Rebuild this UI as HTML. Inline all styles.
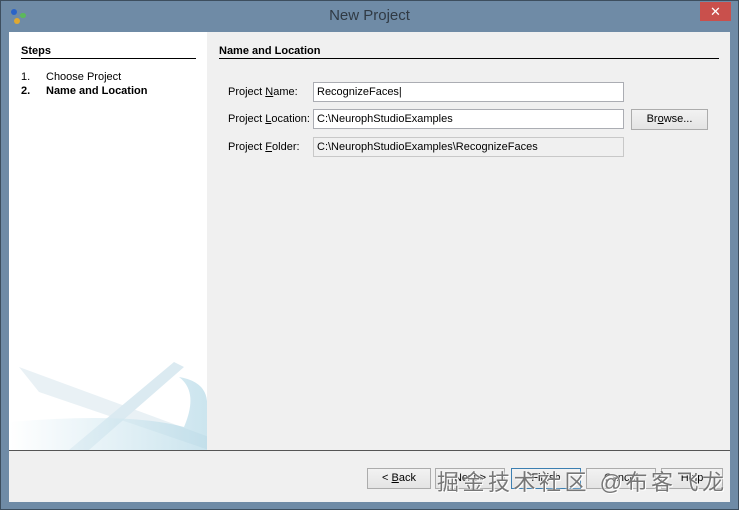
<!DOCTYPE html>
<html><head><meta charset="utf-8"><style>
body{margin:0;width:739px;height:510px;background:#6f8ba6;font-family:"Liberation Sans",sans-serif;font-size:11px;color:#000;position:relative;overflow:hidden}
.a{position:absolute}
.btn{position:absolute;height:21px;background:linear-gradient(#f2f2f2,#e4e4e4);border:1px solid #acacac;box-sizing:border-box;text-align:center;line-height:19px;font-size:11px}
.in{position:absolute;height:20px;box-sizing:border-box;border:1px solid #abadb3;background:#fff;padding-left:3px;line-height:18px;font-size:11px}
</style></head><body>
<div class="a" style="left:0;top:0;width:739px;height:510px;border:1px solid #3d4e5e;box-sizing:border-box"></div>
<div class="a" style="left:11px;top:9px;width:6px;height:6px;border-radius:3px;background:#2a63c8"></div>
<div class="a" style="left:20px;top:13px;width:6px;height:5px;border-radius:3px;background:#5cb85c"></div>
<div class="a" style="left:14px;top:18px;width:6px;height:6px;border-radius:3px;background:#e0a830"></div>
<div class="a" style="left:0;top:7px;width:739px;text-align:center;font-size:15px;color:#303a44">New Project</div>
<div class="a" style="left:700px;top:2px;width:31px;height:19px;background:#c9504c;color:#fff;text-align:center;line-height:19px;font-size:13px">✕</div>
<div class="a" style="left:9px;top:32px;width:721px;height:470px;background:#f0f0f0"></div>
<div class="a" style="left:9px;top:32px;width:198px;height:418px;background:#fff;overflow:hidden">
<svg width="198" height="418" style="position:absolute;left:0;top:0"><defs><linearGradient id="g" x1="0" x2="1"><stop offset="0" stop-color="#fff"/><stop offset="1" stop-color="#a9d3e3"/></linearGradient></defs>
<path d="M10 335 L200 405 L200 418 L30 360Z" fill="#e3eef3" opacity=".8"/>
<path d="M165 330 L60 418 L80 418 L175 335Z" fill="#dbeaf1"/>
<path d="M0 390 Q120 380 175 395 Q190 360 170 345 Q200 350 198 375 L198 418 L0 418Z" fill="url(#g)" opacity=".6"/>
</svg></div>
<div class="a" style="left:9px;top:450px;width:721px;height:1px;background:#555"></div>
<div class="a" style="left:21px;top:45px;font-weight:bold">Steps</div>
<div class="a" style="left:21px;top:58px;width:175px;height:1px;background:#000"></div>
<div class="a" style="left:21px;top:71px">1.</div><div class="a" style="left:46px;top:71px">Choose Project</div>
<div class="a" style="left:21px;top:85px;font-weight:bold">2.</div><div class="a" style="left:46px;top:85px;font-weight:bold">Name and Location</div>
<div class="a" style="left:219px;top:45px;font-weight:bold">Name and Location</div>
<div class="a" style="left:219px;top:58px;width:500px;height:1px;background:#000"></div>
<div class="a" style="left:228px;top:86px">Project <u>N</u>ame:</div>
<div class="a" style="left:228px;top:113px">Project <u>L</u>ocation:</div>
<div class="a" style="left:228px;top:141px">Project <u>F</u>older:</div>
<div class="in" style="left:313px;top:82px;width:311px">RecognizeFaces|</div>
<div class="in" style="left:313px;top:109px;width:311px">C:\NeurophStudioExamples</div>
<div class="in" style="left:313px;top:137px;width:311px;background:#f0f0f0;border-color:#c8c8c8">C:\NeurophStudioExamples\RecognizeFaces</div>
<div class="btn" style="left:631px;top:109px;width:77px;height:21px">Br<u>o</u>wse...</div>
<div class="btn" style="left:367px;top:468px;width:64px">&lt; <u>B</u>ack</div>
<div class="btn" style="left:435px;top:468px;width:70px">Next &gt;</div>
<div class="btn" style="left:511px;top:468px;width:70px;border-color:#3c7fb1">Finish</div>
<div class="btn" style="left:586px;top:468px;width:70px">Cancel</div>
<div class="btn" style="left:661px;top:468px;width:62px">Help</div>
<div class="a" style="left:437px;top:465px;font-size:22px;color:#777;letter-spacing:3.5px;font-family:'Liberation Sans','Noto Sans CJK SC',sans-serif;text-shadow:0 0 2px #fff,1px 1px 0 #fff">掘金技术社区 @布客飞龙</div>
</body></html>
